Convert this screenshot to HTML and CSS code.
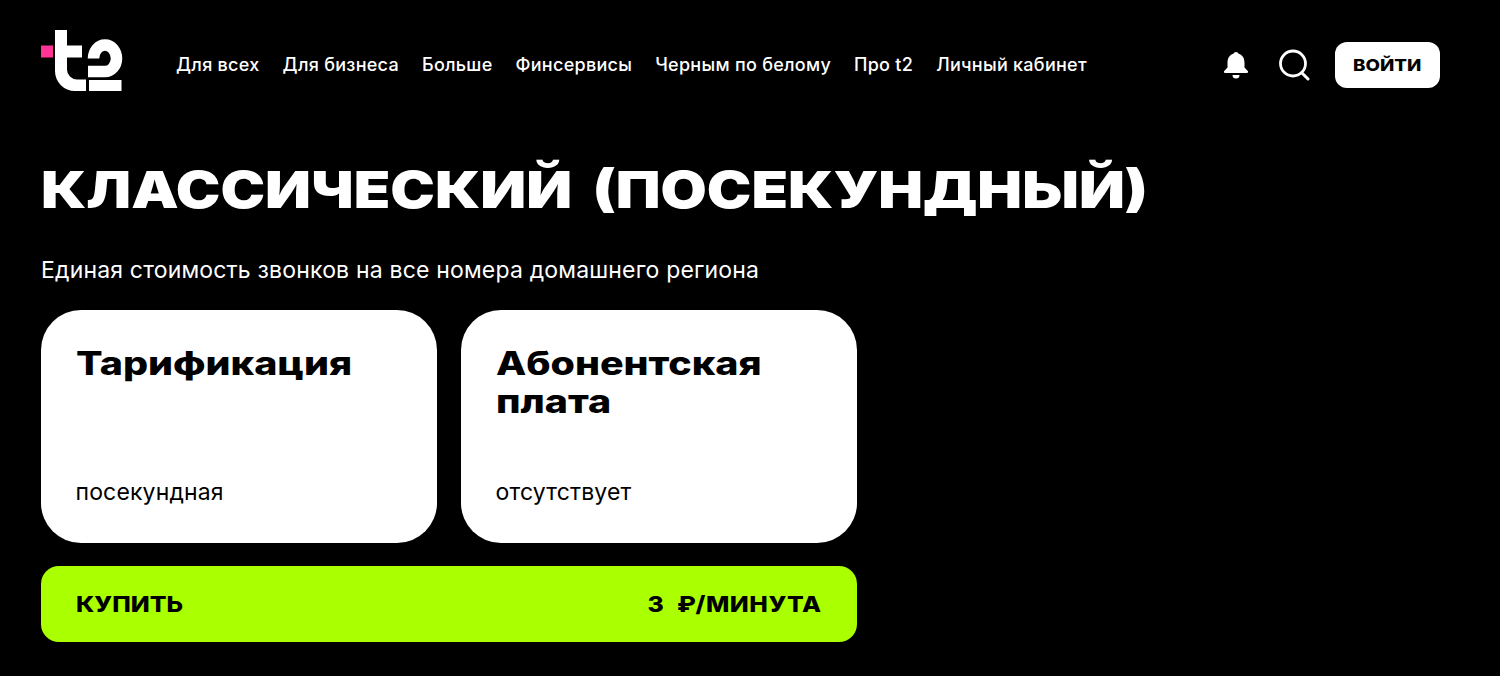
FILE: index.html
```html
<!DOCTYPE html>
<html lang="ru">
<head>
<meta charset="utf-8">
<title>Классический (посекундный)</title>
<link rel="stylesheet" href="styles.css">
</head>
<body>
<header class="header">
  <a class="logo" href="#" aria-label="t2">
    <svg width="82" height="62" viewBox="41 30 82 62">
      <rect x="41" y="45.500" width="12" height="12" fill="#ff3495"/>
      <path d="M55 30h12v15.500h15v12H67v12a10 10 0 0 0 10 10h9V91H75a20 20 0 0 1-20-20z" fill="#fff"/>
      <path d="M93.500 58.500a11.500 13.500 0 0 1 23 0a11.500 13 0 0 1-11.500 13H88" fill="none" stroke="#fff" stroke-width="11.500"/>
      <rect x="89" y="80" width="32.500" height="11" fill="#fff"/>
    </svg>
  </a>
  <nav class="nav">
    <a href="#">Для всех</a>
    <a href="#">Для бизнеса</a>
    <a href="#">Больше</a>
    <a href="#">Финсервисы</a>
    <a href="#">Черным по белому</a>
    <a href="#">Про t2</a>
    <a href="#">Личный кабинет</a>
  </nav>
  <div class="actions">
    <svg class="bell" width="26" height="28" viewBox="0 0 26 28"><path d="M13 1a3 3 0 0 1 2.700 1.800C20 4 21.500 8 21.500 12v4.500l3.300 3.600c.7.8.2 2-.9 2H2.100c-1.100 0-1.600-1.200-.9-2l3.300-3.600V12c0-4 1.500-8 5.800-9.200A3 3 0 0 1 13 1z" fill="#fff"/><path d="M9.500 24h7a3.500 3.500 0 0 1-7 0z" fill="#fff"/></svg>
    <svg class="search" width="32" height="32" viewBox="0 0 32 32"><circle cx="15" cy="14.500" r="12.500" fill="none" stroke="#fff" stroke-width="2.800"/><path d="M24 24l6 6" stroke="#fff" stroke-width="3" stroke-linecap="round"/></svg>
    <a class="login" href="#"><span>ВОЙТИ</span></a>
  </div>
</header>
<main class="main">
  <h1 class="title"><span>КЛАССИЧЕСКИЙ (ПОСЕКУНДНЫЙ)</span></h1>
  <p class="lead">Единая стоимость звонков на все номера домашнего региона</p>
  <section class="cards">
    <article class="card">
      <h2 class="card-title"><span>Тарификация</span></h2>
      <p class="card-text">посекундная</p>
    </article>
    <article class="card">
      <h2 class="card-title"><span>Абонентская<br>плата</span></h2>
      <p class="card-text">отсутствует</p>
    </article>
  </section>
  <a class="buy" href="#"><span class="buy-left">КУПИТЬ</span><span class="buy-right">3 ₽/МИНУТА</span></a>
</main>
</body>
</html>
```
FILE: styles.css
```css
* { box-sizing: border-box; }
html, body { margin: 0; background: #000; color: #fff; overflow: hidden; }
body { height: 676px; font-family: "Inter", "Liberation Sans", sans-serif; }
a { color: inherit; text-decoration: none; }
.header { display: flex; align-items: center; height: 129px; padding: 0 60px 0 41px; }
.logo { display: flex; width: 135px; margin-bottom: 8px; }
.nav { display: flex; gap: 23px; font-size: 18px; font-weight: 500; letter-spacing: 0.28px; }
.actions { margin-left: auto; display: flex; align-items: center; }
.bell { margin-right: 29px; }
.search { margin-right: 25px; }
.login { display: flex; align-items: center; justify-content: center; width: 105px; height: 46px; border-radius: 12px; background: #fff; color: #000; font-size: 16px; font-weight: 800; }
.login span { display: inline-block; transform: scaleX(1.17); }
.main { padding: 0 41px; }
.title { margin: 0; height: 125px; padding-top: 27px; font-size: 50.500px; line-height: 68px; font-weight: 900; white-space: nowrap; word-spacing: 7px; }
.title span { display: inline-block; transform: scaleX(1.183); transform-origin: 0 50%; }
.lead { margin: 0; height: 56px; padding-top: 1px; font-size: 23px; line-height: 30px; letter-spacing: 0.18px; }
.cards { display: flex; gap: 24px; }
.card { width: 396px; height: 233px; padding: 35px 35px 36px 34.500px; border-radius: 40px; background: #fff; color: #000; display: flex; flex-direction: column; justify-content: space-between; }
.card-title { margin: 0; font-size: 32px; line-height: 38px; font-weight: 800; }
.card-title span { display: inline-block; transform: scaleX(1.23); transform-origin: 0 50%; white-space: nowrap; }
.card-text { margin: 0; font-size: 23px; line-height: 30px; letter-spacing: 0.15px; }
.buy { margin-top: 23px; display: flex; justify-content: space-between; align-items: center; width: 816px; height: 76px; padding: 0 35px 1px; border-radius: 18px; background: #aaff00; color: #000; font-size: 22px; font-weight: 800; }
.buy-left, .buy-right { display: inline-block; }
.buy-left { transform: scaleX(1.126); transform-origin: 0 50%; }
.buy-right { transform: scaleX(1.126); transform-origin: 100% 50%; word-spacing: 6px; letter-spacing: 0.5px; }
```
